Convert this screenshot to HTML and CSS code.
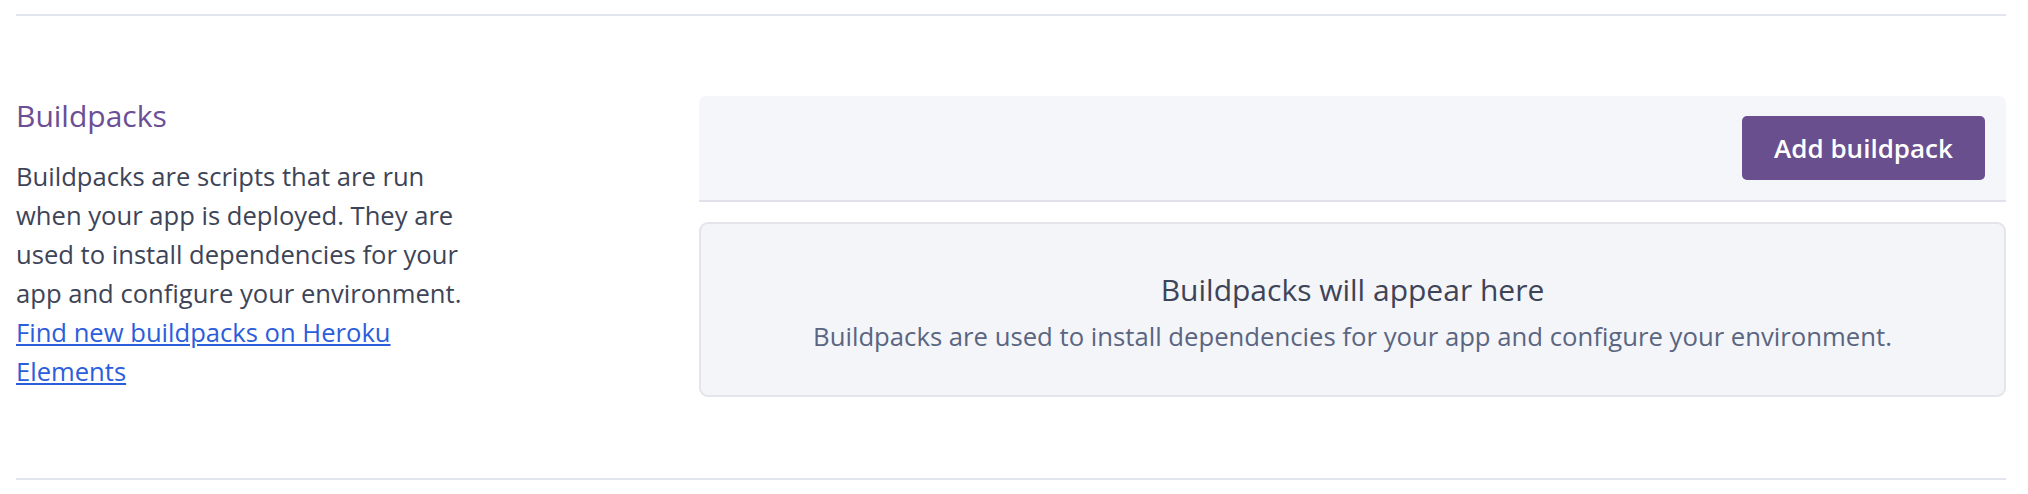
FILE: index.html
```html
<!DOCTYPE html>
<html lang="en">
<head>
<meta charset="utf-8">
<title>Buildpacks</title>
<link rel="stylesheet" href="styles.css">
</head>
<body>
<div class="page">
  <section class="settings-section">
    <div class="section-info">
      <h2 class="section-title">Buildpacks</h2>
      <p class="section-desc">Buildpacks are scripts that are run when your app is deployed. They are used to install dependencies for your app and configure your environment. <a class="section-link" href="#">Find new buildpacks on Heroku Elements</a></p>
    </div>
    <div class="section-body">
      <div class="panel-header">
        <button class="btn-primary" type="button">Add buildpack</button>
      </div>
      <div class="empty-state">
        <div class="empty-title">Buildpacks will appear here</div>
        <div class="empty-text">Buildpacks are used to install dependencies for your app and configure your environment.</div>
      </div>
    </div>
  </section>
</div>
</body>
</html>
```

FILE: styles.css
```css
html, body {
  margin: 0;
  padding: 0;
  background: #ffffff;
}

body {
  font-family: "Open Sans", "Noto Sans", sans-serif;
  color: #3e4457;
}

.page {
  padding: 14px 22px 0 16px;
}

.settings-section {
  display: grid;
  grid-template-columns: 683px 1fr;
  border-top: 2px solid #e1e5ee;
  border-bottom: 2px solid #e1e5ee;
  padding: 80px 0 81px;
}

.section-info {
  max-width: 462px;
}

.section-title {
  margin: 0 0 21px;
  font-size: 30px;
  line-height: 40px;
  font-weight: 400;
  color: #6b4e96;
}

.section-desc {
  margin: 0;
  font-size: 25.6px;
  line-height: 39px;
  color: #3e4457;
}

.section-link {
  color: #2b5edb;
  text-decoration: underline;
}

.section-body {
  display: flex;
  flex-direction: column;
  gap: 20px;
}

.panel-header {
  display: flex;
  justify-content: flex-end;
  align-items: center;
  height: 104px;
  padding: 0 21px 0 0;
  background: #f5f6fa;
  border-bottom: 2px solid #e0e1ea;
  border-radius: 7px 7px 0 0;
}

.btn-primary {
  width: 243px;
  height: 64px;
  border: none;
  border-radius: 5px;
  background: #694f8e;
  color: #ffffff;
  font-family: "Open Sans", "Noto Sans", sans-serif;
  font-size: 26px;
  font-weight: 600;
  cursor: pointer;
}

.empty-state {
  display: flex;
  flex-direction: column;
  align-items: center;
  padding: 46px 20px 40px;
  background: #f4f5f8;
  border: 2px solid #e4e5ea;
  border-radius: 9px;
  text-align: center;
}

.empty-title {
  font-size: 30px;
  line-height: 40px;
  color: #3e4457;
  margin-bottom: 9px;
}

.empty-text {
  font-size: 25.7px;
  line-height: 36px;
  color: #5a6581;
}
```
